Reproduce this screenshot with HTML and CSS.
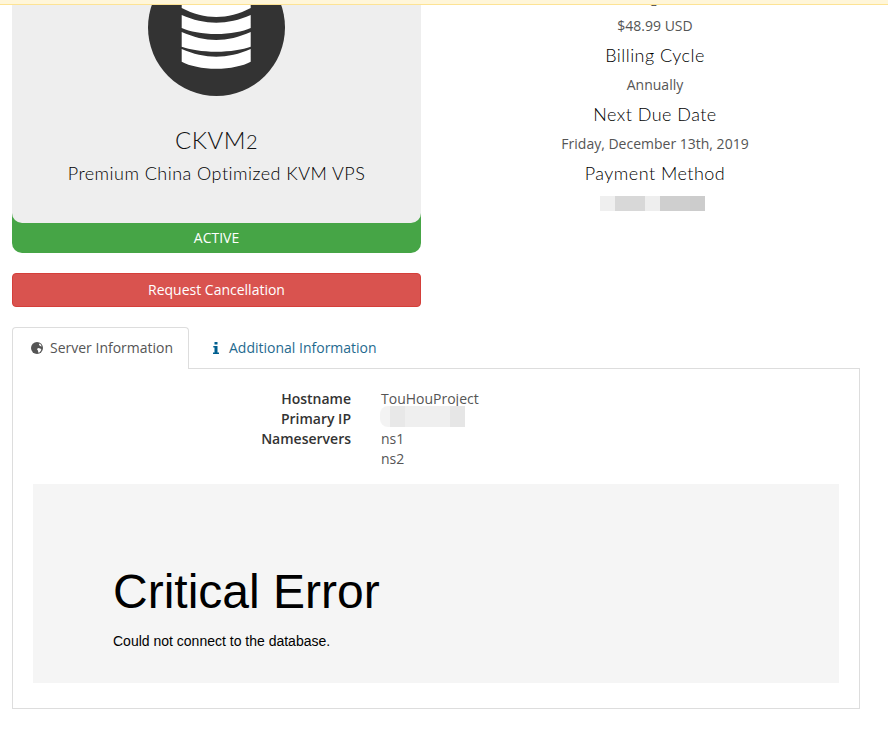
FILE: index.html
```html
<!DOCTYPE html>
<html lang="en">
<head>
<meta charset="utf-8">
<title>Product Details</title>
<link rel="stylesheet" href="styles.css">
</head>
<body>
<div class="notice-strip"></div>
<main class="page">
  <section class="overview">
    <div class="overview-left">
      <div class="product-card">
        <div class="product-details">
          <svg class="product-icon" width="137" height="137" viewBox="0 0 137 137" aria-hidden="true">
            <circle cx="68.5" cy="68.5" r="68.5" fill="#333"/>
            <path fill="#fff" d="M33.7 30V49C45 55 57 58 68.2 58S91.5 55 102.7 49V30Z"/>
            <path fill="#fff" d="M33.7 56C45 61 57 63.7 68.2 63.7S91.5 61 102.7 56V69C95 72.5 82 75 68.2 75S41.5 72.5 33.7 69Z"/>
            <path fill="#fff" d="M33.7 73C45 78 57 81 68.2 81S91.5 78 102.7 73V87.7C95 90.5 82 92.7 68.2 92.7S41.5 90.5 33.7 87.7Z"/>
            <path fill="#fff" d="M33.7 90C45 95 57 97.7 68.2 97.7S91.5 95 102.7 90V102.7C95 107 82 109.7 68.2 109.7S41.5 107 33.7 102.7Z"/>
          </svg>
          <h3 class="product-name">CKVM<span class="oldstyle">2</span></h3>
          <h4 class="product-plan">Premium China Optimized KVM VPS</h4>
        </div>
        <div class="product-status">ACTIVE</div>
      </div>
      <a class="cancel-button" href="#">Request Cancellation</a>
    </div>
    <div class="overview-right">
      <h4 class="info-heading">Recurring Amount</h4>
      <p class="info-value">$48.99 USD</p>
      <h4 class="info-heading">Billing Cycle</h4>
      <p class="info-value">Annually</p>
      <h4 class="info-heading">Next Due Date</h4>
      <p class="info-value">Friday, December 13th, 2019</p>
      <h4 class="info-heading">Payment Method</h4>
      <p class="info-value"><span class="redact redact-payment"></span></p>
    </div>
  </section>

  <nav class="tabs">
    <a class="tab tab-active" href="#">
      <svg class="tab-icon" width="12" height="12" viewBox="0 0 12 12" aria-hidden="true">
        <circle cx="6" cy="6" r="6" fill="#555"/>
        <path fill="#fff" d="M7 6.1l2.4.3 1 1.3-1.6 2.5-1.4.5-.5-2.2-.9-1.2zM8.2 1.4l1.6 1.2.9 1.9-1.7-.5-1-1.2z"/>
      </svg>
      <span>Server Information</span>
    </a>
    <a class="tab" href="#">
      <svg class="tab-icon" width="6" height="12" viewBox="0 0 6 12" aria-hidden="true">
        <path fill="#005f8f" d="M1.5 0h3v2.4h-3zM.3 4h4.2v6.4H6V12H0v-1.6h1.5V5.6H.3z"/>
      </svg>
      <span>Additional Information</span>
    </a>
  </nav>
  <section class="tab-panel">
    <dl class="server-info">
      <dt>Hostname</dt><dd>TouHouProject</dd>
      <dt>Primary IP</dt><dd><span class="redact redact-ip"></span></dd>
      <dt>Nameservers</dt><dd>ns1</dd>
      <dt></dt><dd>ns2</dd>
    </dl>
    <div class="error-box">
      <h1 class="error-title">Critical Error</h1>
      <p class="error-text">Could not connect to the database.</p>
    </div>
  </section>
</main>
</body>
</html>
```
FILE: styles.css
```css
* { box-sizing: border-box; }
html, body { margin: 0; height: 747px; overflow: hidden; background: #fff; }
body { font-family: "Open Sans", sans-serif; font-size: 14px; line-height: 20px; color: #333; }

.notice-strip {
  position: absolute; top: 0; left: 0; right: 0; height: 5px; z-index: 2;
  background: #fff6d9; border-bottom: 1px solid #fde394;
}

.page { width: 848px; margin: -60px 0 0 12px; }

.overview { display: flex; gap: 29px; }
.overview-left { width: 409px; display: flex; flex-direction: column; gap: 20px; }
.overview-right { width: 410px; text-align: center; padding-top: 42px; }

.product-card { background: #46a546; border-radius: 10px; padding-bottom: 30px; position: relative; }
.product-details {
  background: #eee; border-radius: 0 0 10px 10px; height: 283px; padding-top: 19px;
  text-align: center; display: flex; flex-direction: column; align-items: center;
}
.product-icon { display: block; flex: none; }
.product-name {
  font-family: Lato, sans-serif; font-weight: 300; font-size: 24px; line-height: 30px;
  margin: 29px 0 0; letter-spacing: .5px; color: #111;
}
.oldstyle { font-size: 20px; }
.product-plan {
  font-family: Lato, sans-serif; font-weight: 300; font-size: 18px; line-height: 20px;
  margin: 7px 0 0; color: #000; letter-spacing: .47px;
}
.product-status {
  position: absolute; left: 0; right: 0; bottom: 0; height: 30px; line-height: 30px;
  color: #fff; text-align: center;
}
.cancel-button {
  display: block; height: 34px; line-height: 32px; text-align: center; text-decoration: none;
  color: #fff; background: #d9534f; border: 1px solid #d43f3a; border-radius: 4px;
}

.info-heading {
  font-family: Lato, sans-serif; font-weight: 300; font-size: 18px; line-height: 29.5px; height: 29.5px;
  margin: 0; color: #000; letter-spacing: .47px;
}
.info-value { margin: 0; height: 29.5px; line-height: 27.5px; color: #555; }

.redact { display: inline-block; vertical-align: middle; }
.redact-payment {
  width: 105px; height: 15px; margin: -1px 5px 0 0;
  background: linear-gradient(90deg, #efefef 0 15px, #d8d8d8 15px 45px, #eee 45px 60px, #cfcfcf 60px 90px, #ccc 90px);
}
.redact-ip {
  width: 85px; height: 21px; margin: -3px 0 0 -1px; vertical-align: top; border-radius: 8px 0 0 8px;
  background: linear-gradient(90deg, #f3f3f3 0 10px, #e8e8e8 10px 25px, #efefef 25px 70px, #e6e6e6 70px);
}

.tabs { display: flex; margin-top: 20px; height: 42px; }
.tab {
  display: flex; align-items: center; gap: 7px; height: 42px; padding: 0 18px 2px 18px;
  text-decoration: none; color: #1f6a8f; border: 1px solid transparent; border-bottom: 0; white-space: nowrap;
}
.tab-active {
  width: 177px; color: #555; background: #fff; position: relative; z-index: 1;
  border-color: #ddd; border-radius: 4px 4px 0 0;
}
.tab-icon { flex: none; }
.tab + .tab { padding-left: 23px; }
.tab + .tab .tab-icon { margin-right: 3px; }

.tab-panel { border: 1px solid #ddd; margin-top: -1px; height: 341px; padding: 20px; }
.server-info {
  display: grid; grid-template-columns: 318px 1fr; column-gap: 30px; margin: 0; color: #555;
}
.server-info dt { text-align: right; font-weight: 600; color: #333; height: 20px; }
.server-info dd { margin: 0; height: 20px; }

.error-box {
  margin-top: 15px; height: 199px; background: #f5f5f5; padding: 75px 80px 0;
  font-family: "Liberation Sans", Arial, sans-serif; color: #000;
}
.error-title { font-size: 48px; font-weight: 400; line-height: 66px; margin: 0; }
.error-text { font-size: 14px; line-height: 20px; margin: 6px 0 0; }
```
